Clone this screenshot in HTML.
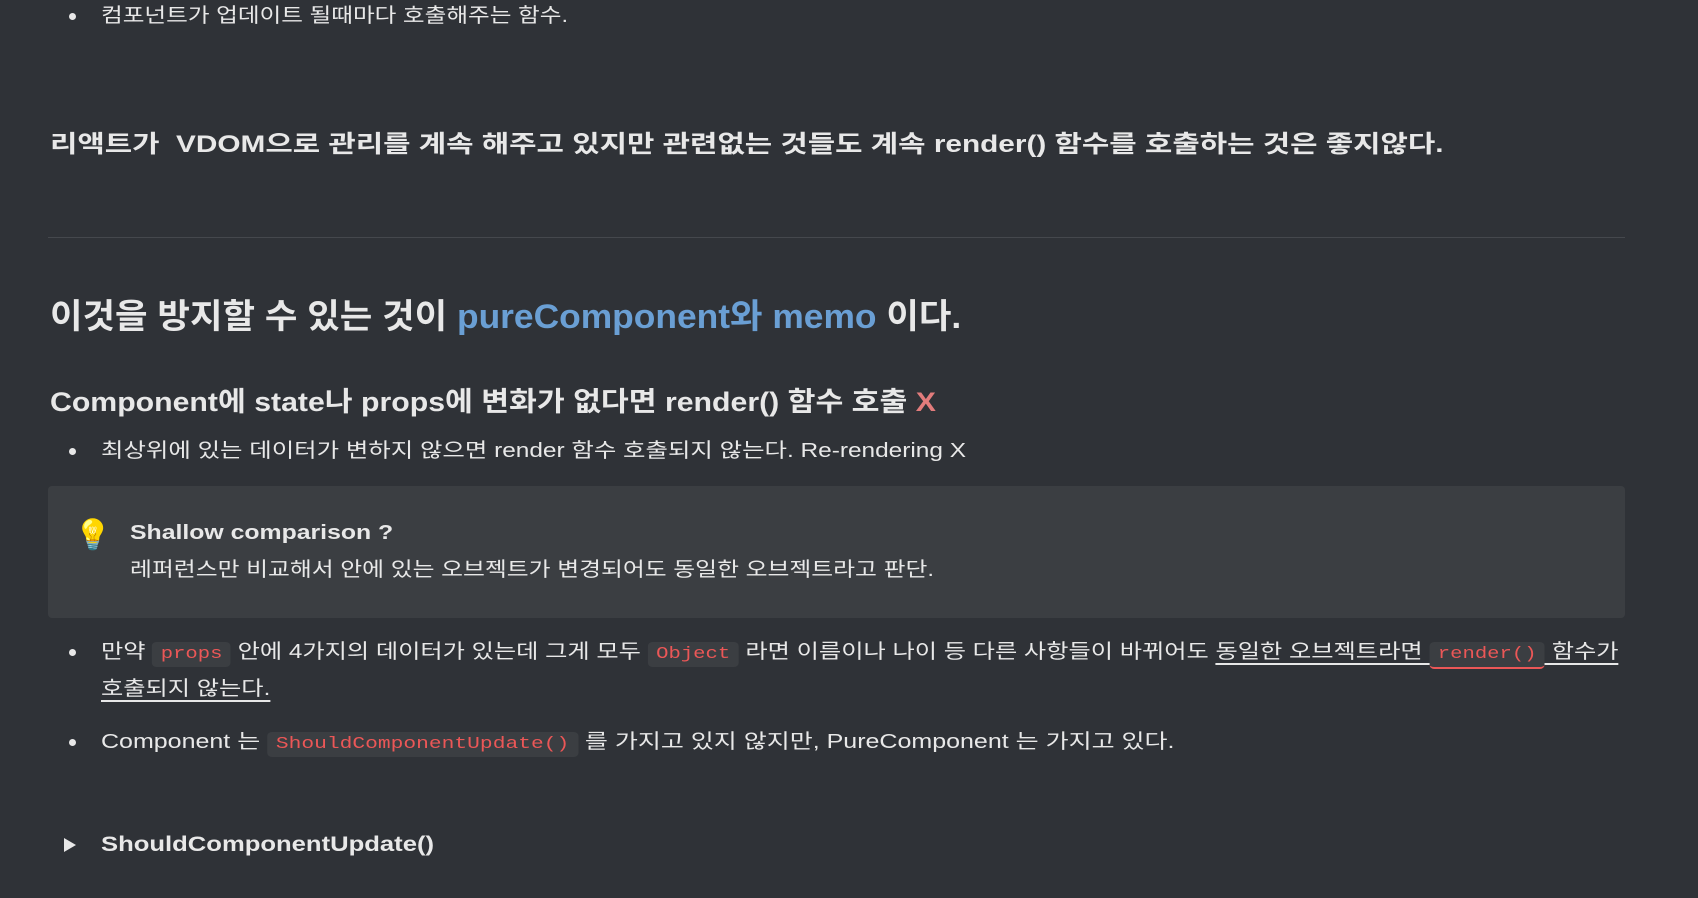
<!DOCTYPE html>
<html><head><meta charset="utf-8"><style>
html,body{margin:0;padding:0;width:1698px;height:898px;overflow:hidden;background:#2f3237;}
body{font-family:"Liberation Sans","Noto Sans CJK KR",sans-serif;color:#e8e8e8;position:relative;}
.a{position:absolute;white-space:nowrap;transform-origin:0 50%;}
.t{font-size:20px;line-height:28px;}
.dot{position:absolute;width:7px;height:7px;border-radius:50%;background:#e8e8e8;}
code{font-family:"Liberation Mono","DejaVu Sans Mono",monospace;font-size:17px;color:#eb5757;background:#3b3e42;border-radius:4px;padding:3px 7px;}
.u{border-bottom:2px solid #e8e8e8;}
</style></head><body>
<div class="dot" style="left:69px;top:13px"></div>
<div class="a t" style="left:101px;top:2px;transform:scaleX(1.18)">컴포넌트가 업데이트 될때마다 호출해주는 함수.</div>

<div class="a" style="left:50px;top:129px;font-size:24px;font-weight:bold;line-height:32px;transform:scaleX(1.24)">리액트가 &nbsp;VDOM으로 관리를 계속 해주고 있지만 관련없는 것들도 계속 render() 함수를 호출하는 것은 좋지않다.</div>

<div class="a" style="left:48px;top:237px;width:1577px;height:1px;background:#45484d"></div>

<div class="a" style="left:50px;top:296px;font-size:34px;font-weight:bold;line-height:42px;transform:scaleX(1.04)">이것을 방지할 수 있는 것이 <span style="color:#6a9fd4">pureComponent와 memo</span> 이다.</div>

<div class="a" style="left:50px;top:385px;font-size:27px;font-weight:bold;line-height:34px;transform:scaleX(1.12)">Component에 state나 props에 변화가 없다면 render() 함수 호출 <span style="color:#e27c7c">X</span></div>

<div class="dot" style="left:69px;top:448px"></div>
<div class="a t" style="left:101px;top:437px;transform:scaleX(1.22)">최상위에 있는 데이터가 변하지 않으면 render 함수 호출되지 않는다. Re-rendering X</div>

<div class="a" style="left:48px;top:486px;width:1577px;height:132px;background:#3b3e42;border-radius:4px"></div>
<div class="a" style="left:74px;top:516px;font-size:30px;line-height:40px">💡</div>
<div class="a" style="left:130px;top:519px;font-size:20px;font-weight:bold;line-height:28px;transform:scaleX(1.24)">Shallow comparison ?</div>
<div class="a t" style="left:130px;top:556px;transform:scaleX(1.19)">레퍼런스만 비교해서 안에 있는 오브젝트가 변경되어도 동일한 오브젝트라고 판단.</div>

<div class="dot" style="left:69px;top:649px"></div>
<div class="a t" style="left:101px;top:638px;transform:scaleX(1.21)">만약 <code>props</code> 안에 4가지의 데이터가 있는데 그게 모두 <code>Object</code> 라면 이름이나 나이 등 다른 사항들이 바뀌어도 <span class="u">동일한 오브젝트라면 <code style="border-bottom:2px solid #eb5757">render()</code> 함수가</span></div>
<div class="a t" style="left:101px;top:675px;transform:scaleX(1.21)"><span class="u">호출되지 않는다.</span></div>

<div class="dot" style="left:69px;top:739px"></div>
<div class="a t" style="left:101px;top:728px;transform:scaleX(1.25)">Component 는 <code>ShouldComponentUpdate()</code> 를 가지고 있지 않지만, PureComponent 는 가지고 있다.</div>

<div class="a" style="left:64px;top:838px;width:0;height:0;border-top:7px solid transparent;border-bottom:7px solid transparent;border-left:12px solid #e8e8e8"></div>
<div class="a" style="left:101px;top:831px;font-size:21px;font-weight:bold;line-height:28px;transform:scaleX(1.22)">ShouldComponentUpdate()</div>
</body></html>
